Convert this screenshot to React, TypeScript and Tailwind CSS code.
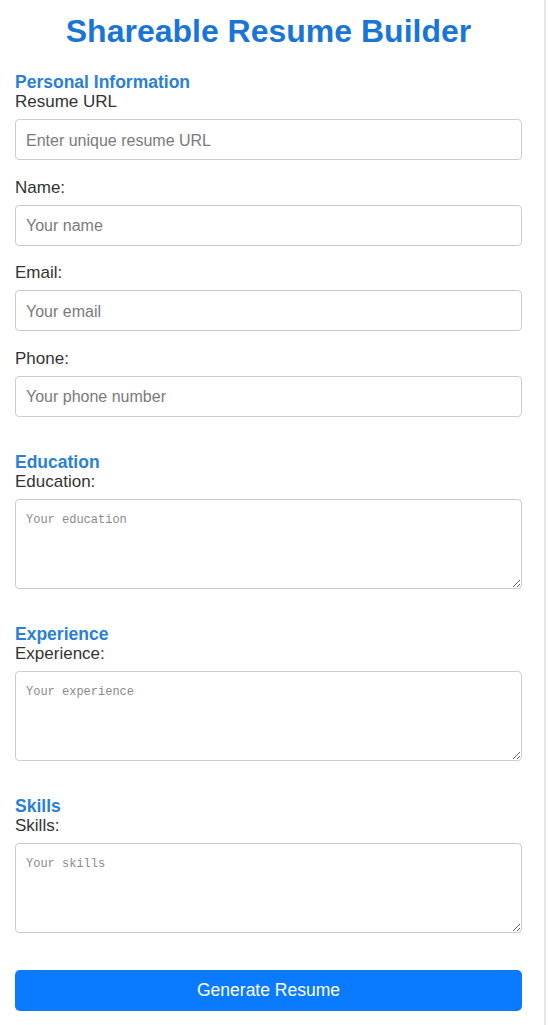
import React, { useState } from 'react';

type FieldProps = {
  id: string;
  label: string;
  placeholder: string;
  value: string;
  onChange: (v: string) => void;
  multiline?: boolean;
};

function Field({ id, label, placeholder, value, onChange, multiline }: FieldProps) {
  return (
    <div>
      <label htmlFor={id} className="block text-[17px] leading-[20px] text-[#333] mb-[7px]">
        {label}
      </label>
      {multiline ? (
        <textarea
          id={id}
          value={value}
          onChange={(e) => onChange(e.target.value)}
          placeholder={placeholder}
          className="block w-full h-[90px] px-[10px] pt-[12px] pb-[10px] border border-[#ccc] rounded-[4px] font-['Liberation_Mono',monospace] text-[12px] leading-[16px] text-[#333] placeholder:text-[#8a8a8a] outline-none"
        />
      ) : (
        <input
          id={id}
          type="text"
          value={value}
          onChange={(e) => onChange(e.target.value)}
          placeholder={placeholder}
          className="block w-full h-[41px] px-[10px] pt-[2px] border border-[#ccc] rounded-[4px] text-[16px] text-[#333] placeholder:text-[#7a7a7a] outline-none"
        />
      )}
    </div>
  );
}

function SectionTitle({ children }: { children: React.ReactNode }) {
  return <h2 className="text-[17.5px] leading-[20px] font-bold text-[#2a7fd6]">{children}</h2>;
}

export default function App() {
  const [form, setForm] = useState({
    url: '',
    name: '',
    email: '',
    phone: '',
    education: '',
    experience: '',
    skills: '',
  });

  const set = (key: keyof typeof form) => (v: string) => setForm({ ...form, [key]: v });

  return (
    <div className="flex min-h-[1025px] bg-white font-['Liberation_Sans',Arial,sans-serif]">
      <div className="w-[537px] px-[15px] pt-[11px]">
        <h1 className="text-center text-[32px] leading-[40px] font-bold text-[#1a76d6]">
          Shareable Resume Builder
        </h1>

        <form className="mt-[21px] flex flex-col gap-[35px]" onSubmit={(e) => e.preventDefault()}>
          <section>
            <SectionTitle>Personal Information</SectionTitle>
            <div className="flex flex-col gap-[17.6px]">
              <Field id="url" label="Resume URL" placeholder="Enter unique resume URL" value={form.url} onChange={set('url')} />
              <Field id="name" label="Name:" placeholder="Your name" value={form.name} onChange={set('name')} />
              <Field id="email" label="Email:" placeholder="Your email" value={form.email} onChange={set('email')} />
              <Field id="phone" label="Phone:" placeholder="Your phone number" value={form.phone} onChange={set('phone')} />
            </div>
          </section>

          <section>
            <SectionTitle>Education</SectionTitle>
            <Field id="education" label="Education:" placeholder="Your education" value={form.education} onChange={set('education')} multiline />
          </section>

          <section>
            <SectionTitle>Experience</SectionTitle>
            <Field id="experience" label="Experience:" placeholder="Your experience" value={form.experience} onChange={set('experience')} multiline />
          </section>

          <section>
            <SectionTitle>Skills</SectionTitle>
            <Field id="skills" label="Skills:" placeholder="Your skills" value={form.skills} onChange={set('skills')} multiline />
          </section>
        </form>

        <button
          type="button"
          className="mt-[37px] w-full h-[41px] rounded-[5px] bg-[#0a7bff] text-white text-[17.5px]"
        >
          Generate Resume
        </button>
      </div>
      <div className="ml-[7px] w-[2px] bg-[#e6e6e6]" />
    </div>
  );
}
